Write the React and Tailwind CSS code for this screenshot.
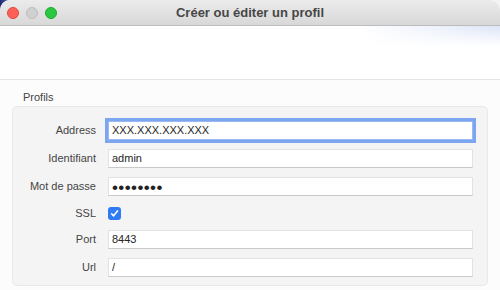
import React from 'react';

const rows = [
  { label: 'Address', value: 'XXX.XXX.XXX.XXX', focus: true },
  { label: 'Identifiant', value: 'admin' },
  { label: 'Mot de passe', value: '••••••••', password: true },
  { label: 'SSL', checkbox: true },
  { label: 'Port', value: '8443' },
  { label: 'Url', value: '/' },
];

function Field({ value, focus, password }) {
  return (
    <div
      className={`flex-1 h-[19px] flex items-center bg-white pl-[3px] ${
        focus
          ? 'outline-[3px] outline-[#7ca6ef] border border-[#9ab9f2]'
          : 'border border-[#e2e2e2] border-b-[#c9c9c9]'
      }`}
    >
      {password ? (
        <span className="text-[17px] leading-none tracking-[0.4px] text-[#222] mt-[1px]">{value}</span>
      ) : (
        <span className="text-[11px] text-[#262626] leading-none">{value}</span>
      )}
    </div>
  );
}

export default function App() {
  return (
    <div
      className="w-[500px] h-[290px] overflow-hidden bg-[linear-gradient(90deg,#1c2b78_0%,#8a93c0_3%,#f4f4f4_6%)]"
      style={{ fontFamily: '"Liberation Sans", Arial, sans-serif' }}
    >
      <div className="h-full bg-[#fcfcfc] rounded-t-[10px] overflow-hidden flex flex-col">
        {/* Title bar */}
        <div className="h-[26px] shrink-0 relative flex items-center justify-center bg-[linear-gradient(#ebebeb,#d8d8d8)] border-b border-[#bdbdbd]">
          <div className="absolute left-[7px] top-[7px] flex gap-[7px]">
            <span className="w-[12px] h-[12px] rounded-full bg-[#fe5f57] border border-[#e2463f]" />
            <span className="w-[12px] h-[12px] rounded-full bg-[#d0d0d0] border border-[#bcbcbc]" />
            <span className="w-[12px] h-[12px] rounded-full bg-[#2ac840] border border-[#1fa831]" />
          </div>
          <span className="text-[13px] font-bold text-[#474747]">Créer ou éditer un profil</span>
        </div>

        {/* Header banner */}
        <div className="h-[54px] shrink-0 border-b border-[#e4e4e4] bg-[linear-gradient(to_bottom,rgba(255,255,255,0)_0%,#ffffff_38%),linear-gradient(to_right,#ffffff_72%,#dde5f7_100%)]" />

        {/* Content */}
        <div className="flex-1 px-[12px] pt-[11px] flex flex-col">
          <div className="pl-[11px] text-[11px] text-[#444] leading-[13px] mb-[2px]">Profils</div>
          <div className="flex-1 mb-[4px] bg-[#f4f4f4] border border-[#e9e9e9] rounded-[5px] pt-[14px] pr-[14px] flex flex-col gap-[9px]">
            {rows.map((r) => (
              <div key={r.label} className={`flex items-center ${r.checkbox ? 'h-[16px]' : 'h-[19px]'}`}>
                <div className="w-[83px] shrink-0 text-right text-[11px] text-[#444]">{r.label}</div>
                <div className="w-[12px] shrink-0" />
                {r.checkbox ? (
                  <div className="w-[13px] h-[13px] rounded-[3px] bg-[#2f7bf5] flex items-center justify-center">
                    <svg width="9" height="9" viewBox="0 0 10 10" fill="none">
                      <path d="M1.8 5.3 L4 7.6 L8.3 2.2" stroke="white" strokeWidth="1.8" strokeLinecap="round" strokeLinejoin="round" />
                    </svg>
                  </div>
                ) : (
                  <Field value={r.value} focus={r.focus} password={r.password} />
                )}
              </div>
            ))}
          </div>
        </div>
      </div>
    </div>
  );
}
